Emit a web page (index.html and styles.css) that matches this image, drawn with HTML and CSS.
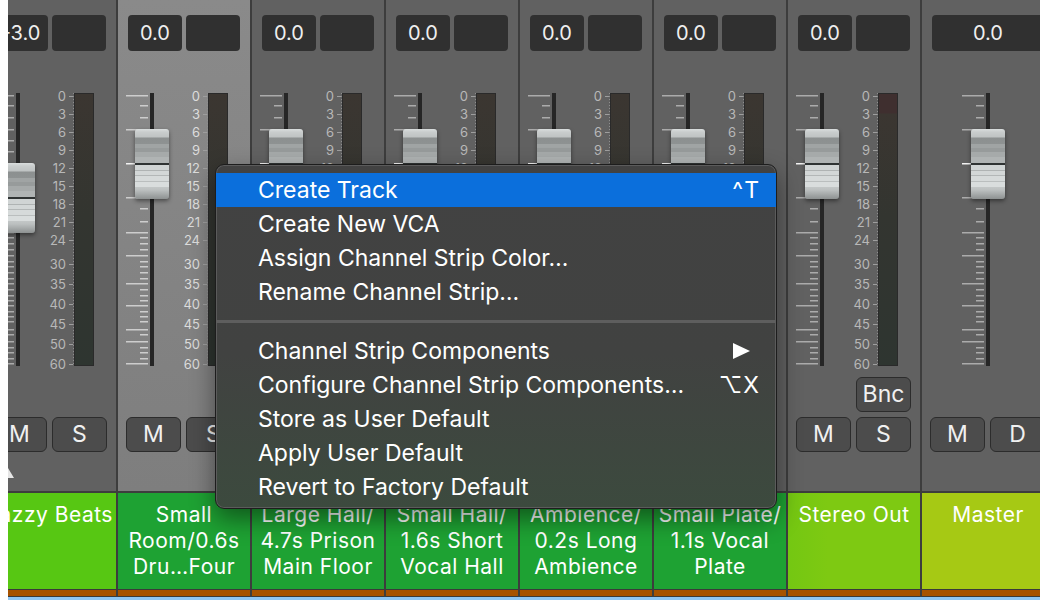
FILE: index.html
```html
<!DOCTYPE html>
<html lang="en">
<head>
    <meta charset="UTF-8">
    <title>Mixer</title>
    <link rel="stylesheet" href="styles.css">
</head>
<body>
    <svg class="defs" aria-hidden="true">
        <symbol id="fader-ticks" viewBox="0 0 44 273">
            <rect x="24" y="0" width="4" height="273" fill="#262626"/>
            <g fill="currentColor">
                <rect x="0" y="2" width="22" height="1.5"/>
                <rect x="0" y="36" width="22" height="1.5"/>
                <rect x="0" y="104" width="22" height="1.5"/>
                <rect x="0" y="139" width="22" height="1.5"/>
                <rect x="0" y="162" width="22" height="1.5"/>
                <rect x="0" y="190" width="22" height="1.5"/>
                <rect x="0" y="212" width="22" height="1.5"/>
                <rect x="0" y="236" width="22" height="1.5"/>
                <rect x="0" y="248" width="22" height="1.5"/>
                <rect x="0" y="270" width="22" height="1.5"/>
                <rect x="14" y="12" width="8" height="1.5"/>
                <rect x="14" y="24" width="8" height="1.5"/>
                <rect x="14" y="47" width="8" height="1.5"/>
                <rect x="14" y="58" width="8" height="1.5"/>
                <rect x="14" y="81" width="8" height="1.5"/>
                <rect x="14" y="93" width="8" height="1.5"/>
                <rect x="14" y="115" width="8" height="1.5"/>
                <rect x="14" y="128" width="8" height="1.5"/>
                <rect x="14" y="144" width="8" height="1.5"/>
                <rect x="14" y="150" width="8" height="1.5"/>
                <rect x="14" y="156" width="8" height="1.5"/>
                <rect x="14" y="168" width="8" height="1.5"/>
                <rect x="14" y="173" width="8" height="1.5"/>
                <rect x="14" y="179" width="8" height="1.5"/>
                <rect x="14" y="185" width="8" height="1.5"/>
                <rect x="14" y="196" width="8" height="1.5"/>
                <rect x="14" y="202" width="8" height="1.5"/>
                <rect x="14" y="207" width="8" height="1.5"/>
                <rect x="14" y="218" width="8" height="1.5"/>
                <rect x="14" y="223" width="8" height="1.5"/>
                <rect x="14" y="228" width="8" height="1.5"/>
                <rect x="14" y="241" width="8" height="1.5"/>
                <rect x="14" y="254" width="8" height="1.5"/>
                <rect x="14" y="259" width="8" height="1.5"/>
                <rect x="14" y="265" width="8" height="1.5"/>
            </g>
            <rect x="0" y="70" width="22" height="1.5" fill="#f2f2f2"/>
        </symbol>
    </svg>

    <div class="mixer">
        <div class="strips">

            <!-- Jazzy Beats (scrolled partly out of view) -->
            <div class="strip">
                <div class="strip-body">
                    <div class="values"><div class="value">-3.0</div><div class="value"></div></div>
                    <div class="fader-section">
                        <div class="fader">
                            <svg class="fader-ticks" width="44" height="273"><use href="#fader-ticks"/></svg>
                            <div class="fader-cap" style="top: 70px"></div>
                        </div>
                        <div class="scale">
                            <span>0</span><span>3</span><span>6</span><span>9</span><span>12</span><span>15</span><span>18</span><span>21</span><span>24</span>
                            <span class="low gap">30</span><span class="low">35</span><span class="low">40</span><span class="low">45</span><span class="low">50</span><span class="low">60</span>
                        </div>
                        <div class="meter"></div>
                    </div>
                    <div class="buttons">
                        <button class="btn btn-m">M</button>
                        <button class="btn btn-s">S</button>
                    </div>
                    <div class="pan-arrow"></div>
                </div>
                <div class="strip-name lime">Jazzy Beats</div>
                <div class="strip-foot"></div>
            </div>

            <div class="strip selected">
                <div class="strip-body">
                    <div class="values"><div class="value">0.0</div><div class="value"></div></div>
                    <div class="fader-section">
                        <div class="fader">
                            <svg class="fader-ticks" width="44" height="273"><use href="#fader-ticks"/></svg>
                            <div class="fader-cap"></div>
                        </div>
                        <div class="scale">
                            <span>0</span><span>3</span><span>6</span><span>9</span><span>12</span><span>15</span><span>18</span><span>21</span><span>24</span>
                            <span class="low gap">30</span><span class="low">35</span><span class="low">40</span><span class="low">45</span><span class="low">50</span><span class="low">60</span>
                        </div>
                        <div class="meter"></div>
                    </div>
                    <div class="buttons">
                        <button class="btn btn-m">M</button>
                        <button class="btn btn-s">S</button>
                    </div>
                </div>
                <div class="strip-name green">Small<br>Room/0.6s<br>Dru…Four</div>
                <div class="strip-foot"></div>
            </div>

            <div class="strip">
                <div class="strip-body">
                    <div class="values"><div class="value">0.0</div><div class="value"></div></div>
                    <div class="fader-section">
                        <div class="fader">
                            <svg class="fader-ticks" width="44" height="273"><use href="#fader-ticks"/></svg>
                            <div class="fader-cap"></div>
                        </div>
                        <div class="scale">
                            <span>0</span><span>3</span><span>6</span><span>9</span><span>12</span><span>15</span><span>18</span><span>21</span><span>24</span>
                            <span class="low gap">30</span><span class="low">35</span><span class="low">40</span><span class="low">45</span><span class="low">50</span><span class="low">60</span>
                        </div>
                        <div class="meter"></div>
                    </div>
                    <div class="buttons">
                        <button class="btn btn-m">M</button>
                        <button class="btn btn-s">S</button>
                    </div>
                </div>
                <div class="strip-name green">Large Hall/<br>4.7s Prison<br>Main Floor</div>
                <div class="strip-foot"></div>
            </div>

            <div class="strip">
                <div class="strip-body">
                    <div class="values"><div class="value">0.0</div><div class="value"></div></div>
                    <div class="fader-section">
                        <div class="fader">
                            <svg class="fader-ticks" width="44" height="273"><use href="#fader-ticks"/></svg>
                            <div class="fader-cap"></div>
                        </div>
                        <div class="scale">
                            <span>0</span><span>3</span><span>6</span><span>9</span><span>12</span><span>15</span><span>18</span><span>21</span><span>24</span>
                            <span class="low gap">30</span><span class="low">35</span><span class="low">40</span><span class="low">45</span><span class="low">50</span><span class="low">60</span>
                        </div>
                        <div class="meter"></div>
                    </div>
                    <div class="buttons">
                        <button class="btn btn-m">M</button>
                        <button class="btn btn-s">S</button>
                    </div>
                </div>
                <div class="strip-name green">Small Hall/<br>1.6s Short<br>Vocal Hall</div>
                <div class="strip-foot"></div>
            </div>

            <div class="strip">
                <div class="strip-body">
                    <div class="values"><div class="value">0.0</div><div class="value"></div></div>
                    <div class="fader-section">
                        <div class="fader">
                            <svg class="fader-ticks" width="44" height="273"><use href="#fader-ticks"/></svg>
                            <div class="fader-cap"></div>
                        </div>
                        <div class="scale">
                            <span>0</span><span>3</span><span>6</span><span>9</span><span>12</span><span>15</span><span>18</span><span>21</span><span>24</span>
                            <span class="low gap">30</span><span class="low">35</span><span class="low">40</span><span class="low">45</span><span class="low">50</span><span class="low">60</span>
                        </div>
                        <div class="meter"></div>
                    </div>
                    <div class="buttons">
                        <button class="btn btn-m">M</button>
                        <button class="btn btn-s">S</button>
                    </div>
                </div>
                <div class="strip-name green">Ambience/<br>0.2s Long<br>Ambience</div>
                <div class="strip-foot"></div>
            </div>

            <div class="strip">
                <div class="strip-body">
                    <div class="values"><div class="value">0.0</div><div class="value"></div></div>
                    <div class="fader-section">
                        <div class="fader">
                            <svg class="fader-ticks" width="44" height="273"><use href="#fader-ticks"/></svg>
                            <div class="fader-cap"></div>
                        </div>
                        <div class="scale">
                            <span>0</span><span>3</span><span>6</span><span>9</span><span>12</span><span>15</span><span>18</span><span>21</span><span>24</span>
                            <span class="low gap">30</span><span class="low">35</span><span class="low">40</span><span class="low">45</span><span class="low">50</span><span class="low">60</span>
                        </div>
                        <div class="meter"></div>
                    </div>
                    <div class="buttons">
                        <button class="btn btn-m">M</button>
                        <button class="btn btn-s">S</button>
                    </div>
                </div>
                <div class="strip-name green">Small Plate/<br>1.1s Vocal<br>Plate</div>
                <div class="strip-foot"></div>
            </div>

            <div class="strip">
                <div class="strip-body">
                    <div class="values"><div class="value">0.0</div><div class="value"></div></div>
                    <div class="fader-section">
                        <div class="fader">
                            <svg class="fader-ticks" width="44" height="273"><use href="#fader-ticks"/></svg>
                            <div class="fader-cap"></div>
                        </div>
                        <div class="scale">
                            <span>0</span><span>3</span><span>6</span><span>9</span><span>12</span><span>15</span><span>18</span><span>21</span><span>24</span>
                            <span class="low gap">30</span><span class="low">35</span><span class="low">40</span><span class="low">45</span><span class="low">50</span><span class="low">60</span>
                        </div>
                        <div class="meter clip"></div>
                    </div>
                    <div class="buttons">
                        <button class="btn btn-bnc">Bnc</button>
                        <button class="btn btn-m">M</button>
                        <button class="btn btn-s">S</button>
                    </div>
                </div>
                <div class="strip-name stereo">Stereo Out</div>
                <div class="strip-foot"></div>
            </div>

            <div class="strip master">
                <div class="strip-body">
                    <div class="values"><div class="value wide">0.0</div></div>
                    <div class="fader-section">
                        <div class="fader">
                            <svg class="fader-ticks" width="44" height="273"><use href="#fader-ticks"/></svg>
                            <div class="fader-cap"></div>
                        </div>
                    </div>
                    <div class="buttons">
                        <button class="btn btn-m">M</button>
                        <button class="btn btn-s">D</button>
                    </div>
                </div>
                <div class="strip-name master-color">Master</div>
                <div class="strip-foot"></div>
            </div>

        </div>
        <div class="mixer-foot"></div>
    </div>

    <div class="context-menu">
        <div class="menu-item active"><span>Create Track</span><span class="shortcut">^T</span></div>
        <div class="menu-item"><span>Create New VCA</span></div>
        <div class="menu-item"><span>Assign Channel Strip Color…</span></div>
        <div class="menu-item"><span>Rename Channel Strip…</span></div>
        <div class="menu-separator"></div>
        <div class="menu-item">
            <span>Channel Strip Components</span>
            <svg class="submenu-arrow" width="17" height="16" viewBox="0 0 17 16"><polygon points="0,0 17,8 0,16" fill="#fff"/></svg>
        </div>
        <div class="menu-item"><span>Configure Channel Strip Components…</span><span class="shortcut">⌥X</span></div>
        <div class="menu-item"><span>Store as User Default</span></div>
        <div class="menu-item"><span>Apply User Default</span></div>
        <div class="menu-item"><span>Revert to Factory Default</span></div>
    </div>
</body>
</html>
```

FILE: styles.css
```css
:root {
    --strip-bg: #616161;
    --divider: #3d3d3d;
    --box-bg: #303030;
    --btn-bg: #4c4c4c;
    --green: #1ea233;
    --lime: #57c713;
    --stereo: #7ec912;
    --master: #a6c914;
    --menu-blue: #0b6fdc;
}

* {
    box-sizing: border-box;
}

body {
    margin: 0;
    background: #ffffff;
    font-family: Inter, "DejaVu Sans", sans-serif;
    overflow: hidden;
}

.defs {
    position: absolute;
    width: 0;
    height: 0;
}

.mixer {
    margin-left: 8px;
    width: 1032px;
    overflow: hidden;
}

.strips {
    display: flex;
    margin-left: -24px;
}

.strip {
    flex: 0 0 134px;
    display: flex;
    flex-direction: column;
    border-right: 2px solid var(--divider);
}

.strip-body {
    height: 493px;
    padding-top: 15px;
    background: var(--strip-bg);
    border-bottom: 2px solid var(--divider);
}

.strip.selected .strip-body {
    background: linear-gradient(#8a8a8a, #7e7e7e);
}

/* value boxes */
.values {
    display: flex;
    gap: 4px;
    margin: 0 10px;
}

.value {
    width: 54px;
    height: 36px;
    border-radius: 4px;
    background: var(--box-bg);
    color: #efefef;
    font-size: 20px;
    line-height: 36px;
    text-align: center;
}

.value.wide {
    width: 112px;
}

/* fader + meter */
.fader-section {
    display: flex;
    height: 273px;
    margin-top: 42px;
}

.fader {
    position: relative;
    width: 44px;
    margin-left: 8px;
}

.master .fader {
    margin-left: 40px;
}

.fader-ticks {
    display: block;
    color: #ababab;
}

.selected .fader-ticks {
    color: #cdcdcd;
}

.fader-cap {
    position: absolute;
    left: 9px;
    top: 36px;
    width: 34px;
    height: 70px;
    border-radius: 3px;
    box-shadow: 0 2px 4px rgba(0, 0, 0, 0.45);
    background: linear-gradient(to bottom,
        #dadede 0, #c9cdcd 3px, #bfc3c3 8px,
        #8c9090 9px, #8e9292 15px,
        #a0a4a4 15px, #a0a4a4 19px,
        #979b9b 19px, #979b9b 23px,
        #a6aaaa 23px, #a6aaaa 28px,
        #b0b4b4 28px, #b0b4b4 34px,
        #2f3333 34px, #2f3333 36px,
        #d0d4d4 36px, #d0d4d4 41px,
        #afb3b3 41px, #afb3b3 42px,
        #d3d7d7 42px, #d3d7d7 46px,
        #b3b7b7 46px, #b3b7b7 47px,
        #d6dada 47px, #d6dada 52px,
        #babebe 52px, #babebe 53px,
        #d9dddd 53px, #d9dddd 58px,
        #c3c7c7 58px, #bcc0c0 61px,
        #8d9191 70px);
}

.scale {
    align-self: flex-start;
    display: flex;
    flex-direction: column;
    align-items: flex-end;
    width: 38px;
    margin-top: -6px;
    padding-right: 1px;
    color: #b8b8b8;
    font-size: 13px;
    background: repeating-linear-gradient(to bottom, #8e8e8e 0 1px, transparent 1px 3px) right 0 top 6px / 1px 273px no-repeat;
}

.selected .scale {
    color: #dcdcdc;
}

.scale span {
    display: flex;
    align-items: center;
    height: 18px;
}

.scale span::after {
    content: "";
    width: 4px;
    height: 1px;
    margin-left: 3px;
    background: #9e9e9e;
}

.scale span.low {
    height: 20px;
}

.scale span.gap {
    margin-top: 5px;
}

.meter {
    width: 20px;
    border: 1px solid #2a2a2a;
    background: linear-gradient(#3b3631, #333530 45%, #2e3530);
}

.meter.clip {
    background: linear-gradient(#3f2f2f 0, #3f2f2f 19px, #3b3631 20px, #333530 45%, #2e3530);
}

/* mute / solo */
.buttons {
    display: grid;
    grid-template-columns: 55px 55px;
    grid-template-rows: 35px 35px;
    gap: 5px;
    margin: 11px 0 0 8px;
}

.btn {
    padding: 0;
    border: 1px solid #2c2c2c;
    border-radius: 6px;
    background: var(--btn-bg);
    color: #f0f0f0;
    font-family: inherit;
    font-size: 23px;
    line-height: 33px;
}

.btn-m {
    grid-row: 2;
    grid-column: 1;
}

.btn-s {
    grid-row: 2;
    grid-column: 2;
}

.btn-bnc {
    grid-row: 1;
    grid-column: 2;
}

.pan-arrow {
    width: 0;
    height: 0;
    margin: 16px 0 0 18px;
    border-left: 6px solid transparent;
    border-right: 6px solid transparent;
    border-bottom: 10px solid #e6e6e6;
}

/* names */
.strip-name {
    height: 97px;
    padding-top: 9px;
    border-bottom: 1px solid #3a3a3a;
    color: #ffffff;
    font-size: 21px;
    line-height: 26px;
    letter-spacing: 0.5px;
    text-align: center;
    white-space: nowrap;
}

.strip-name.green { background: var(--green); }
.strip-name.lime { background: var(--lime); }
.strip-name.stereo { background: linear-gradient(90deg, #74c712, var(--stereo) 30%); }
.strip-name.master-color { background: var(--master); }

.strip-foot {
    height: 7px;
    background: #a65200;
    border-bottom: 1px solid #3a3a3a;
}

.mixer-foot {
    height: 3px;
    background: #8fc6f4;
}

/* context menu */
.context-menu {
    position: absolute;
    left: 215px;
    top: 164px;
    width: 562px;
    padding: 8px 0 4px;
    border: 1px solid #1d1d1d;
    border-radius: 9px;
    background: linear-gradient(#424242, #414241 55%, #3c4a3e);
    box-shadow: inset 0 0 0 1px #5b5b5b, 0 10px 24px rgba(0, 0, 0, 0.45);
    color: #ffffff;
    font-size: 23px;
}

.menu-item {
    display: flex;
    align-items: center;
    justify-content: space-between;
    height: 34px;
    padding: 0 16px 0 42px;
}

.menu-item.active {
    background: var(--menu-blue);
}

.shortcut {
    letter-spacing: 1px;
}

.submenu-arrow {
    margin-right: 10px;
}

.menu-separator {
    height: 3px;
    margin: 11px 0;
    background: #5e5e5e;
}
```
